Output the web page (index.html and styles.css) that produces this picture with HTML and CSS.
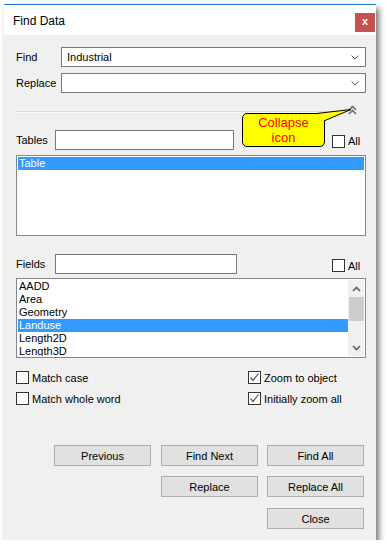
FILE: index.html
```html
<!DOCTYPE html>
<html>
<head>
<meta charset="utf-8">
<link rel="stylesheet" href="styles.css">
</head>
<body>
<div class="window">
  <div class="titlebar">
    <span class="title">Find Data</span>
    <div class="close">x</div>
  </div>
  <div class="content">
    <div class="combo-row">
      <span class="label">Find</span>
      <div class="combo"><span>Industrial</span><svg class="drop" width="8" height="5" viewBox="0 0 8 5"><polyline points="0.5,0.5 4,4 7.5,0.5" fill="none" stroke="#606060" stroke-width="1"/></svg></div>
    </div>
    <div class="combo-row">
      <span class="label">Replace</span>
      <div class="combo"><span></span><svg class="drop" width="8" height="5" viewBox="0 0 8 5"><polyline points="0.5,0.5 4,4 7.5,0.5" fill="none" stroke="#606060" stroke-width="1"/></svg></div>
    </div>
    <div class="sep-row">
      <div class="sep"></div>
      <svg class="collapse" width="9" height="10" viewBox="0 0 9 10"><polyline points="1,5 4.5,1.5 8,5" fill="none" stroke="#707070" stroke-width="1.6"/><polyline points="1,9 4.5,5.5 8,9" fill="none" stroke="#707070" stroke-width="1.6"/></svg>
    </div>
    <div class="search-row">
      <span class="label-s">Tables</span>
      <div class="textbox tables-box"></div>
      <label class="chk all"><span class="box"></span>All</label>
    </div>
    <div class="listbox tables-list">
      <div class="item selected">Table</div>
    </div>
    <div class="search-row fields-row">
      <span class="label-s">Fields</span>
      <div class="textbox fields-box"></div>
      <label class="chk all"><span class="box"></span>All</label>
    </div>
    <div class="listbox fields-list">
      <div class="items">
        <div class="item">AADD</div>
        <div class="item">Area</div>
        <div class="item">Geometry</div>
        <div class="item selected">Landuse</div>
        <div class="item">Length2D</div>
        <div class="item">Length3D</div>
      </div>
      <div class="scrollbar">
        <div class="sb-btn"><svg width="9" height="6" viewBox="0 0 9 6"><polyline points="1,5 4.5,1.5 8,5" fill="none" stroke="#606060" stroke-width="1.7"/></svg></div>
        <div class="sb-thumb"></div>
        <div class="sb-space"></div>
        <div class="sb-btn"><svg width="9" height="6" viewBox="0 0 9 6"><polyline points="1,1 4.5,4.5 8,1" fill="none" stroke="#606060" stroke-width="1.7"/></svg></div>
      </div>
    </div>
    <div class="options">
      <label class="chk"><span class="box"></span>Match case</label>
      <label class="chk"><span class="box checked"><svg width="11" height="11" viewBox="0 0 11 11"><polyline points="1.5,5.5 4,8.5 9.5,1.5" fill="none" stroke="#555" stroke-width="1.2"/></svg></span>Zoom to object</label>
      <label class="chk"><span class="box"></span>Match whole word</label>
      <label class="chk"><span class="box checked"><svg width="11" height="11" viewBox="0 0 11 11"><polyline points="1.5,5.5 4,8.5 9.5,1.5" fill="none" stroke="#555" stroke-width="1.2"/></svg></span>Initially zoom all</label>
    </div>
    <div class="buttons">
      <div class="btn b-prev">Previous</div>
      <div class="btn b-next">Find Next</div>
      <div class="btn b-all">Find All</div>
      <div class="btn b-rep">Replace</div>
      <div class="btn b-repall">Replace All</div>
      <div class="btn b-close">Close</div>
    </div>
  </div>
  <svg class="tail" width="120" height="50" viewBox="0 0 120 50">
    <path d="M74.5,4.5 L109,0.5 L83,11.5" fill="#ffff00" stroke="#000" stroke-width="1"/>
  </svg>
  <div class="tooltip">Collapse<br>icon</div>
</div>
</body>
</html>
```
FILE: styles.css
```css
html, body {
  margin: 0;
  padding: 0;
  background: #ffffff;
}
body {
  font-family: "Liberation Sans", Arial, sans-serif;
  font-size: 11px;
  color: #000;
}
.window {
  position: relative;
  margin: 4px 0 0 4px;
  width: 372px;
  background: #f0f0f0;
  border-top: 1px solid #1d7ad2;
  box-shadow: 3px 4px 6px rgba(0, 0, 0, 0.55);
}
.titlebar {
  height: 30px;
  background: #ffffff;
  display: flex;
  align-items: flex-start;
  justify-content: space-between;
}
.title {
  font-size: 12px;
  margin: 9px 0 0 9px;
  color: #000;
}
.close {
  width: 20px;
  height: 19px;
  margin: 8px 1px 0 0;
  background: #c75050;
  color: #fff;
  font-weight: bold;
  font-size: 11px;
  line-height: 17px;
  text-align: center;
}
.content {
  display: flex;
  flex-direction: column;
  padding: 12px 10px 11px 12px;
}
.combo-row {
  display: flex;
  align-items: center;
  height: 20px;
}
.combo-row + .combo-row {
  margin-top: 6px;
}
.label {
  width: 45px;
  flex: none;
}
.combo {
  flex: 1;
  height: 20px;
  box-sizing: border-box;
  border: 1px solid #7a7a7a;
  background: #fff;
  display: flex;
  align-items: center;
  justify-content: space-between;
  padding: 0 6px 0 5px;
}
.sep-row {
  display: flex;
  align-items: flex-start;
  height: 10px;
  margin-top: 12px;
  padding-right: 9px;
}
.sep {
  flex: 1;
  height: 1px;
  background: #dadada;
  margin-top: 6px;
  margin-right: 2px;
  border-bottom: 1px solid #fbfbfb;
}
.collapse {
  display: block;
}
.search-row {
  display: flex;
  align-items: center;
  height: 20px;
  margin-top: 15px;
}
.label-s {
  width: 39px;
  flex: none;
}
.textbox {
  height: 20px;
  box-sizing: border-box;
  border: 1px solid #7a7a7a;
  background: #fff;
}
.tables-box { width: 179px; }
.fields-box { width: 182px; }
.chk {
  display: flex;
  align-items: center;
  height: 13px;
}
.box {
  width: 13px;
  height: 13px;
  box-sizing: border-box;
  border: 1px solid #333;
  background: #fff;
  margin-right: 3px;
  flex: none;
  display: flex;
  align-items: center;
  justify-content: center;
}
.all {
  margin-left: auto;
  width: 34px;
  margin-top: 2px;
}
.listbox {
  box-sizing: border-box;
  border: 1px solid #828790;
  background: #fff;
  padding: 1px;
}
.tables-list {
  margin-top: 5px;
  height: 81px;
}
.item {
  height: 13px;
  line-height: 13px;
  padding-left: 1px;
  white-space: nowrap;
}
.item.selected {
  background: #3399ff;
  color: #fff;
}
.fields-row {
  margin-top: 18px;
}
.fields-row .all {
  margin-top: 3px;
}
.fields-list {
  margin-top: 4px;
  height: 80px;
  display: flex;
}
.items {
  flex: 1;
  overflow: hidden;
}
.scrollbar {
  width: 16px;
  background: #f0f0f0;
  display: flex;
  flex-direction: column;
  align-items: center;
}
.sb-btn {
  height: 17px;
  width: 16px;
  display: flex;
  align-items: center;
  justify-content: center;
}
.sb-thumb {
  width: 15px;
  height: 24px;
  background: #cdcdcd;
}
.sb-space {
  flex: 1;
}
.options {
  display: grid;
  grid-template-columns: 232px 1fr;
  row-gap: 8px;
  margin-top: 13px;
}
.buttons {
  display: grid;
  grid-template-columns: 97px 97px 97px;
  grid-template-rows: 21px 31px 32px;
  column-gap: 9px;
  justify-content: end;
  padding-right: 2px;
  margin-top: 40px;
}
.btn {
  box-sizing: border-box;
  height: 21px;
  border: 1px solid #adadad;
  background: #e1e1e1;
  display: flex;
  align-items: center;
  justify-content: center;
}
.b-prev { grid-column: 1; grid-row: 1; margin-right: 1px; margin-left: -1px; }
.b-next { grid-column: 2; grid-row: 1; }
.b-all { grid-column: 3; grid-row: 1; }
.b-rep { grid-column: 2; grid-row: 2; margin-top: 10px; }
.b-repall { grid-column: 3; grid-row: 2; margin-top: 10px; }
.b-close { grid-column: 3; grid-row: 3; margin-top: 11px; }
.tail {
  position: absolute;
  left: 238px;
  top: 104px;
  z-index: 2;
  pointer-events: none;
}
.tooltip {
  position: absolute;
  left: 238px;
  top: 108px;
  width: 83px;
  height: 34px;
  box-sizing: border-box;
  border: 1px solid #000;
  border-radius: 5px;
  background: #ffff00;
  color: #ff0000;
  font-size: 13px;
  line-height: 15px;
  text-align: center;
  padding-top: 1px;
  z-index: 1;
}
```
